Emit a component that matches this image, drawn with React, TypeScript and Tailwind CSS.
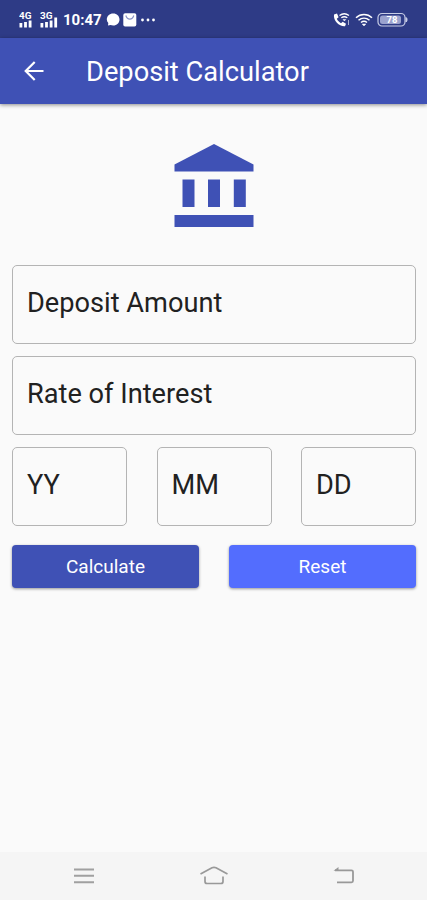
import type { ReactNode } from "react";

const dateFields = ["YY", "MM", "DD"];

function Signal({ label, bars }: { label: string; bars: number[] }) {
  return (
    <svg width="18" height="18" viewBox="0 0 18 18" fill="#fff">
      <text
        x="0"
        y="8"
        fontFamily="Roboto"
        fontSize="9"
        fontWeight="700"
        textLength="12.5"
        lengthAdjust="spacingAndGlyphs"
      >
        {label}
      </text>
      {bars.map((height, i) => (
        <rect key={i} x={0.5 + i * 4.6} y={16.5 - height} width="2.8" height={height} />
      ))}
    </svg>
  );
}

function StatusBar() {
  return (
    <div className="flex h-[38px] items-center bg-[#2e3b86] pl-[19px] pr-[19px] pt-px text-white">
      <Signal label="4G" bars={[4.5, 5.5, 7]} />
      <div className="ml-[3px]">
        <Signal label="3G" bars={[4.5, 5.5, 7, 10]} />
      </div>
      <span className="ml-[5px] w-[41px] whitespace-nowrap pt-[2px] text-[15px] font-bold leading-none">
        10:47
      </span>
      <svg className="ml-[2px]" width="52" height="18" viewBox="0 0 52 18" fill="#fff">
        <path d="M7.200 2.500c3.700 0 6.300 2.600 6.300 6s-2.600 6-6.300 6c-1 0-1.900-.2-2.700-.5L2 14.500l.3-2.500A6 6 0 0 1 .8 8.500c0-3.400 2.700-6 6.400-6z" />
        <rect x="17.300" y="2.300" width="13" height="13.200" rx="1.800" />
        <path d="M19.800 4.500c1.600 4.800 6.400 4.800 8 0" fill="none" stroke="#8992c5" strokeWidth="1.200" />
        <circle cx="36.500" cy="9" r="1.400" />
        <circle cx="42" cy="9" r="1.400" />
        <circle cx="47.500" cy="9" r="1.400" />
      </svg>
      <div className="ml-auto flex items-center">
        <svg width="19" height="18" viewBox="0 0 19 18" fill="none" stroke="#fff">
          <path
            d="M2 3.500l3-1 1.600 3.700-1.800 1.500c1 2 2.300 3.400 4.200 4.500l1.700-1.500 3.300 2-1 2.600C8 16 1 10 2 3.500z"
            fill="#fff"
            stroke="none"
          />
          <path d="M7.500 4.500c3-2.200 6.500-2.200 9.500 0M9.300 6.800c2-1.400 4-1.400 6 0" strokeWidth="1.300" />
          <path d="M11 8.400l1.400 1.600 1.400-1.600z" fill="#fff" strokeWidth=".5" />
          <path d="M16.500 9v5" strokeWidth="1" opacity=".6" />
        </svg>
        <svg className="ml-[4px]" width="18" height="18" viewBox="0 0 18 18" fill="none" stroke="#fff" strokeWidth="1.500">
          <path d="M1 6.800c4.700-4.300 11.300-4.300 16 0M3.500 9.300c3.300-2.900 7.700-2.900 11 0M6 11.500c1.900-1.600 4.100-1.600 6 0" />
          <path d="M7.200 13l1.800 2 1.800-2z" fill="#fff" strokeWidth=".5" />
        </svg>
        <svg className="ml-[4px]" width="31" height="18" viewBox="0 0 31 18">
          <rect x="1" y="2.500" width="27" height="12.500" rx="4" fill="none" stroke="#c8cde6" strokeWidth="1.200" />
          <rect x="3" y="4.500" width="21" height="8.500" rx="2.500" fill="#9aa2ce" />
          <path d="M29 6.500c1.400.4 1.400 4.100 0 4.500z" fill="#c8cde6" stroke="#c8cde6" />
          <text x="15" y="12.200" textAnchor="middle" fontFamily="Roboto" fontSize="9.500" fontWeight="700" fill="#fff">
            78
          </text>
        </svg>
      </div>
    </div>
  );
}

function AppBar() {
  return (
    <header className="flex h-[66px] items-center bg-[#3f51b5] pl-[24px] text-white shadow-[0_1px_4px_rgba(0,0,0,0.45)]">
      <svg width="20" height="20" viewBox="0 0 20 20" fill="none" stroke="#fff" strokeWidth="2.200">
        <path d="M19.500 10H1.800M10.700 1L1.700 10l9 9" />
      </svg>
      <h1 className="ml-[42px] whitespace-nowrap pt-[4px] text-[27.25px] leading-none">
        Deposit Calculator
      </h1>
    </header>
  );
}

function BankIcon() {
  return (
    <svg className="mx-auto" width="80" height="84" viewBox="0 0 80 84" fill="#3f51b5">
      <path d="M40 0L.5 20.500V27.500h79v-7z" />
      <path d="M8.500 35.500h12v27.500h-12zM34 35.500h12v27.500h-12zM59.800 35.500h12v27.500h-12zM.5 71h79v12H.5z" />
    </svg>
  );
}

function Field({ children }: { children: ReactNode }) {
  return (
    <div className="flex h-[79px] items-center rounded-[5px] border border-[#b4b4b4] pb-px pl-[14px] text-[27.200px] leading-none text-[#212121]">
      {children}
    </div>
  );
}

function NavBar() {
  return (
    <nav className="mt-auto flex h-[48px] items-center justify-between bg-[#f5f5f5] pl-[73px] pr-[72px]">
      <svg width="22" height="20" viewBox="0 0 22 20" fill="none" stroke="#a0a0a0" strokeWidth="1.900">
        <path d="M1 3.500h20M1 9.800h20M1 16.200h20" />
      </svg>
      <svg width="30" height="20" viewBox="0 0 30 20" fill="none" stroke="#999" strokeWidth="1.700">
        <path d="M1.500 8L13 1.800q2-.9 4 0L28.500 8M6 10.500v5q0 2 2 2h14q2 0 2-2v-5" />
      </svg>
      <svg width="22" height="20" viewBox="0 0 22 20" fill="none" stroke="#999" strokeWidth="1.800">
        <path d="M2 4.300h16.500q1.500 0 1.500 1.500v9q0 1.500-1.500 1.500H4" />
        <path d="M.5 4.800L5.500 1v3.800z" fill="#999" stroke="none" />
      </svg>
    </nav>
  );
}

export default function App() {
  return (
    <div className="flex h-[900px] w-[427px] flex-col bg-[#fafafa] font-[Roboto,sans-serif]">
      <StatusBar />
      <AppBar />
      <main className="pl-[12px] pr-[11px] pt-[40px]">
        <BankIcon />
        <form className="mt-[37px] flex flex-col gap-[12px]">
          <Field>Deposit Amount</Field>
          <Field>Rate of Interest</Field>
          <div className="grid grid-cols-3 gap-[29.5px]">
            {dateFields.map((label) => (
              <Field key={label}>{label}</Field>
            ))}
          </div>
          <div className="mt-[7px] grid grid-cols-2 gap-[30px] text-[19px] leading-none text-white">
            <button
              type="button"
              className="h-[43px] rounded-[4px] bg-[#3f51b5] shadow-[0_1px_3px_rgba(0,0,0,0.4)]"
            >
              Calculate
            </button>
            <button
              type="button"
              className="h-[43px] rounded-[4px] bg-[#536dfe] shadow-[0_1px_3px_rgba(0,0,0,0.4)]"
            >
              Reset
            </button>
          </div>
        </form>
      </main>
      <NavBar />
    </div>
  );
}
